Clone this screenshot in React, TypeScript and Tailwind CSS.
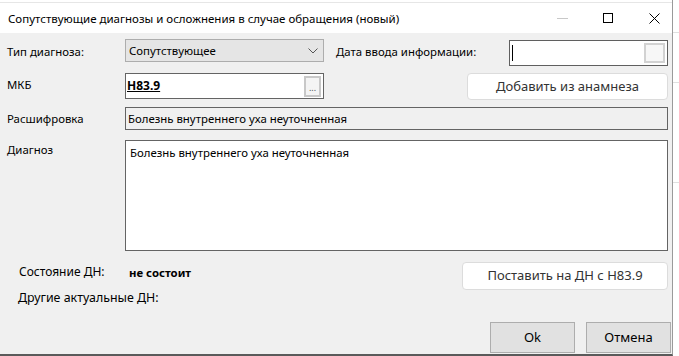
export default function App() {
  return (
    <div
      className="w-[679px] h-[356px] flex overflow-hidden bg-white text-[11.4px] text-black"
      style={{ fontFamily: '"Noto Sans", "Open Sans", sans-serif' }}
    >
      {/* dialog window */}
      <div className="w-[673px] h-full flex flex-col border-r border-[#9a9a9a] border-b-2 border-b-[#5a5a5a]">
        <div className="h-[3px] bg-white border-b border-[#e6e6e6]" />
        {/* title bar */}
        <div className="h-[30px] bg-white flex items-center pr-[12px]">
          <div className="pl-[8px] pt-[1px] flex-1 leading-none text-[11.5px]">
            Сопутствующие диагнозы и осложнения в случае обращения (новый)
          </div>
          <div className="w-[11px] h-px bg-[#c8c8c8]" />
          <div className="ml-[35px] w-[10px] h-[10px] border border-black" />
          <svg className="ml-[36px]" width="11" height="11" viewBox="0 0 11 11">
            <path d="M0.5 0.5 L10.5 10.5 M10.5 0.5 L0.5 10.5" stroke="#000" strokeWidth="1" />
          </svg>
        </div>

        {/* body */}
        <div className="flex-1 bg-[#f0f0f0] flex flex-col pr-[4px]">
          {/* row 1 */}
          <div className="mt-[6px] h-[27px] flex items-start">
            <div className="w-[125px] pl-[7px] pt-[5px] leading-[16px]">Тип диагноза:</div>
            <div className="w-[199px] h-[23px] bg-[#e5e5e5] border border-[#adadad] flex items-center justify-between pl-[3px] pr-[5px]">
              <span>Сопутствующее</span>
              <svg width="10" height="6" viewBox="0 0 10 6">
                <path d="M0.5 0.5 L5 5 L9.5 0.5" fill="none" stroke="#555" strokeWidth="1" />
              </svg>
            </div>
            <div className="w-[185px] pl-[12px] pt-[5px] leading-[16px]">Дата ввода информации:</div>
            <div className="mt-px w-[159px] h-[26px] bg-white border border-[#5f5f5f] flex items-center justify-between pl-[2px] pr-[2px]">
              <div className="w-px h-[16px] bg-black" />
              <div className="w-[21px] h-[20px] border-2 border-[#d2d2d2] bg-[#f7f7f7]" />
            </div>
          </div>

          {/* row 2 */}
          <div className="mt-[7px] h-[27px] flex items-start">
            <div className="w-[125px] pl-[7px] pt-[4px] leading-[16px]">МКБ</div>
            <div className="w-[199px] h-[26px] bg-white border border-[#646464] flex items-center justify-between pl-[1px] pr-[2px]">
              <span className="font-bold underline text-[12px] leading-none">H83.9</span>
              <div className="w-[17px] h-[21px] border-2 border-[#c8c8c8] bg-[#f4f4f4] flex items-end justify-center pb-[3px] text-[9px] leading-none text-[#555]">
                ...
              </div>
            </div>
            <div className="flex-1" />
            <button className="w-[201px] h-[27px] bg-white border border-[#dcdcdc] rounded-[4px] text-[#333] text-[13px]">
              Добавить из анамнеза
            </button>
          </div>

          {/* row 3 */}
          <div className="mt-[7px] h-[23px] flex items-center">
            <div className="w-[125px] pl-[7px]">Расшифровка</div>
            <div className="flex-1 h-full border border-[#646464] bg-[#f0f0f0] flex items-center pl-[2px]">
              Болезнь внутреннего уха неуточненная
            </div>
          </div>

          {/* row 4 */}
          <div className="mt-[10px] h-[111px] flex">
            <div className="w-[125px] pl-[7px] pt-[1px]">Диагноз</div>
            <div className="flex-1 h-full border border-[#646464] bg-white pl-[4px] pt-[4px] leading-[16px]">
              Болезнь внутреннего уха неуточненная
            </div>
          </div>

          {/* row 5 */}
          <div className="mt-[11px] h-[28px] flex items-start">
            <div className="w-[129px] pl-[19px] pt-[1px] text-[12px]">Состояние ДН:</div>
            <div className="pt-[2px] font-bold">не состоит</div>
            <div className="flex-1" />
            <button className="w-[206px] h-[28px] bg-white border border-[#dcdcdc] rounded-[4px] text-[#333] text-[13px]">
              Поставить на ДН с H83.9
            </button>
          </div>

          {/* row 6 */}
          <div className="mt-[-1px] pl-[18px] text-[12.4px] leading-[18px]">Другие актуальные ДН:</div>

          <div className="flex-1" />
          {/* bottom buttons */}
          <div className="mb-[1px] -mr-[3px] flex justify-end gap-[11px]">
            <button className="w-[85px] h-[31px] bg-[#e1e1e1] border border-[#adadad] text-[13px]">Ok</button>
            <button className="w-[85px] h-[31px] bg-[#e1e1e1] border border-[#adadad] text-[13px]">Отмена</button>
          </div>
        </div>
      </div>
      {/* background behind window */}
      <div className="flex-1 h-full bg-white flex flex-col">
        <div className="h-[33px] border-b border-[#e0e0e0]" />
        <div className="h-[50px] border-b border-[#e0e0e0]" />
        <div className="h-[100px] border-b border-[#e0e0e0]" />
        <div className="flex-1" />
      </div>
    </div>
  );
}
